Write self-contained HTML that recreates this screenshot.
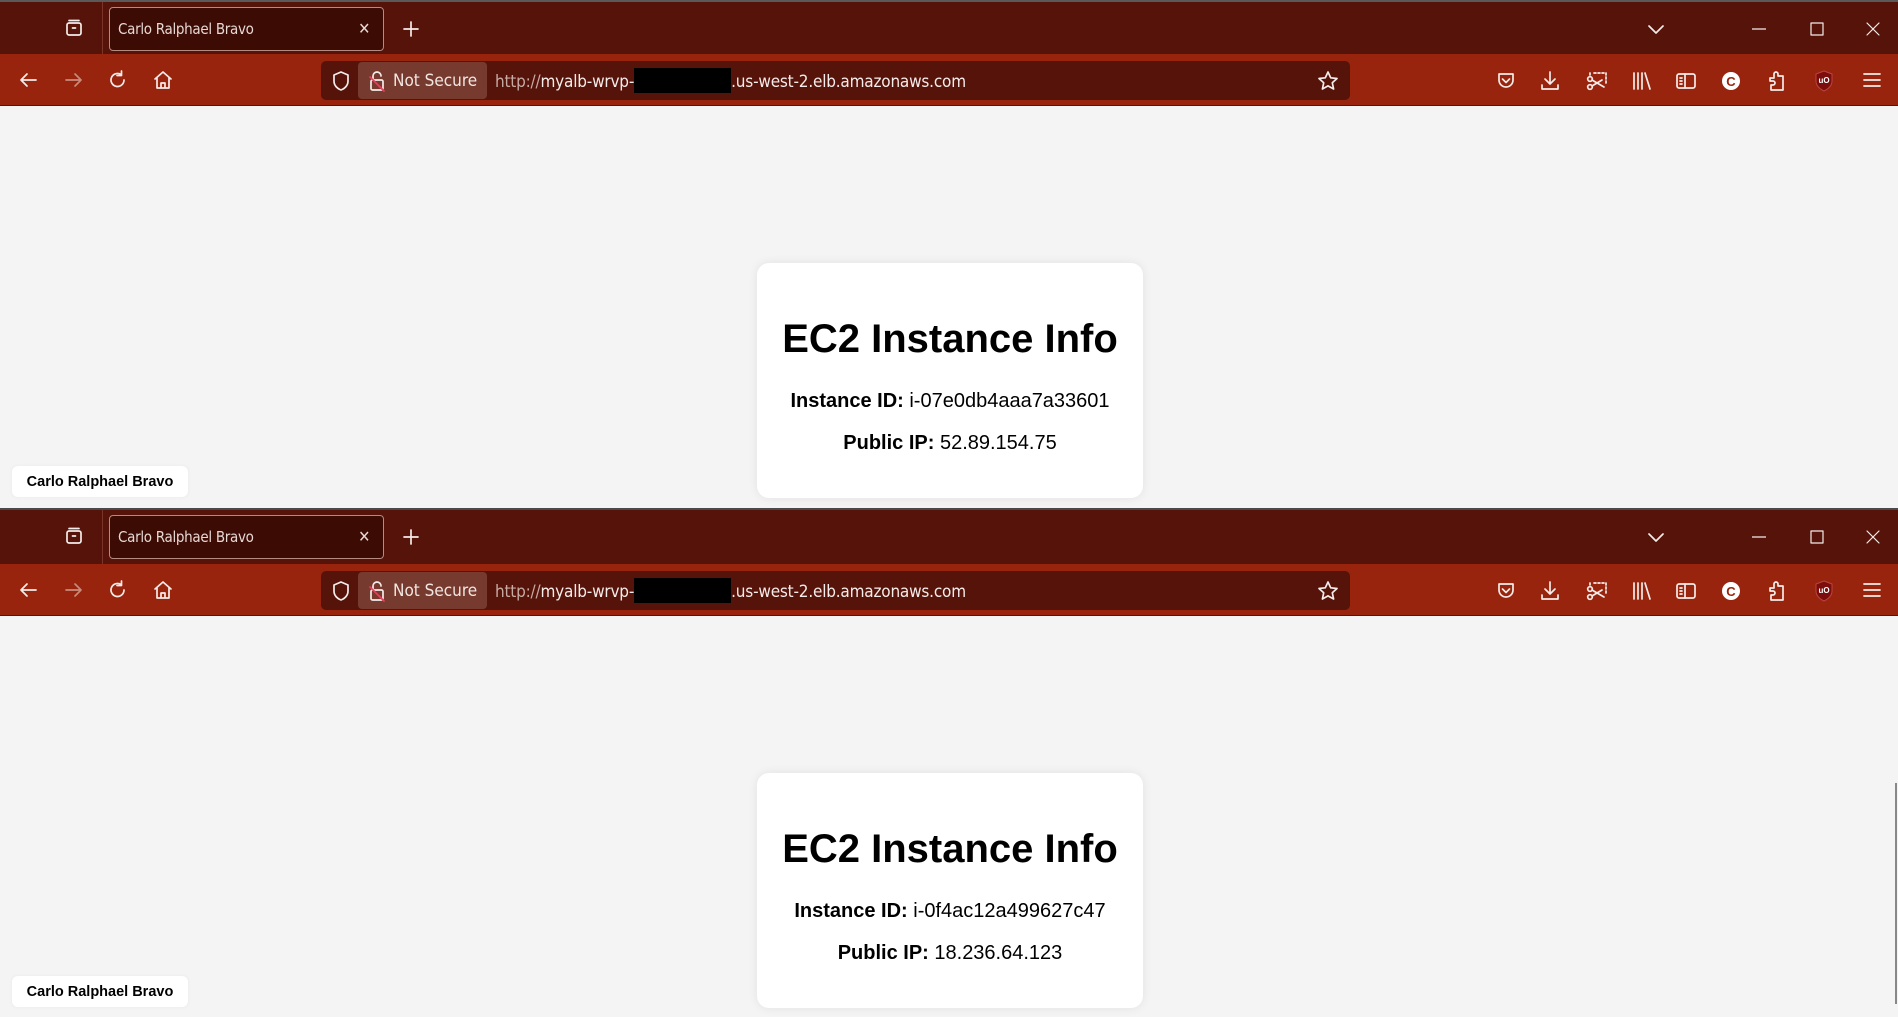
<!DOCTYPE html>
<html><head><meta charset="utf-8"><style>
*{margin:0;padding:0;box-sizing:border-box}
body{width:1898px;height:1017px;overflow:hidden;background:#4a4a4a;font-family:"Liberation Sans",sans-serif;position:relative}
.win{position:absolute;left:0;width:1898px;overflow:hidden;background:#f4f4f4}
.tabbar{position:absolute;left:0;top:0;width:100%;height:54px;background:#561309;border-top:2px solid #5a5a5a}
.toolbar{position:absolute;left:0;top:54px;width:100%;height:52px;background:#98240d;border-bottom:1px solid #5a1208}
.tab{position:absolute;left:109px;top:5px;width:275px;height:44px;background:#3b0b04;border:1px solid #b58a80;border-radius:4px;color:#e8d8d4;font-size:15px;line-height:42px;padding-left:8px;font-family:"DejaVu Sans Condensed","Liberation Sans",sans-serif;letter-spacing:-0.3px}
.tab .x{position:absolute;right:13px;top:0;color:#e8d8d4;font-size:16px}
.sep{position:absolute;left:102px;top:0;width:1px;height:54px;background:#7a3428}
.url{position:absolute;left:321px;top:61px;width:1029px;height:39px;background:#561309;border-radius:5px}
.ns{position:absolute;left:358px;top:62px;width:129px;height:37px;background:#763a2e;border-radius:4px;color:#f2e6e2;font-size:17px;line-height:39px;padding-left:35px;font-family:"DejaVu Sans Condensed","Liberation Sans",sans-serif}
.utext{position:absolute;left:495px;top:63px;line-height:39px;font-size:17px;color:#f4ecea;font-family:"DejaVu Sans Condensed","Liberation Sans",sans-serif;letter-spacing:-0.2px}
.utext .g{color:#c7aaa4}
.red{display:inline-block;width:97px;height:25px;background:#000;vertical-align:-6px}
svg.i{position:absolute;fill:none;stroke:#f4ecea;stroke-width:1.7;stroke-linecap:round;stroke-linejoin:round}
.content{position:absolute;left:0;top:106px;width:100%;height:402px;background:#f4f4f4}
.card{position:absolute;left:757px;width:386px;height:235px;background:#fff;border-radius:12px;box-shadow:0 0 10px rgba(0,0,0,.08);text-align:center;color:#000}
.card h1{font-size:40px;font-weight:bold;margin-top:53px;line-height:46px}
.card p{font-size:20px;margin-top:28px;line-height:23px}
.card p+p{margin-top:19px}
.label{position:absolute;left:12px;width:176px;height:31px;background:#fff;border-radius:6px;font-weight:bold;font-size:14.5px;line-height:33px;text-align:center;box-shadow:0 0 4px rgba(0,0,0,.05)}
</style></head><body>

<div class="win" style="top:0;height:508px">
 <div class="tabbar">
  <svg class="i" style="left:64px;top:16px" width="20" height="20" viewBox="0 0 20 20"><rect x="3" y="5" width="14" height="12" rx="2"/><path d="M5 2.5h10M8.5 10h3"/></svg>
  <div class="sep"></div>
  <div class="tab">Carlo Ralphael Bravo<span class="x">✕</span></div>
  <svg class="i" style="left:403px;top:19px" width="16" height="16" viewBox="0 0 16 16"><path d="M8 1v14M1 8h14"/></svg>
  <svg class="i" style="left:1648px;top:23px" width="16" height="10" viewBox="0 0 16 10"><path d="M1 1l7 7 7-7"/></svg>
  <svg class="i" style="left:1752px;top:26px" width="14" height="2" viewBox="0 0 14 2"><path d="M0 1h14" stroke-width="1.2"/></svg>
  <svg class="i" style="left:1810px;top:20px" width="14" height="14" viewBox="0 0 14 14"><rect x="1" y="1" width="12" height="12" stroke-width="1.2"/></svg>
  <svg class="i" style="left:1866px;top:20px" width="14" height="14" viewBox="0 0 14 14"><path d="M1 1l12 12M13 1L1 13" stroke-width="1.2"/></svg>
 </div>
 <div class="toolbar">
  <svg class="i" style="left:19px;top:18px" width="18" height="16" viewBox="0 0 18 16"><path d="M17 8H2M8 2L2 8l6 6"/></svg>
  <svg class="i" style="left:65px;top:18px;stroke:#c98a7c" width="18" height="16" viewBox="0 0 18 16"><path d="M1 8h15M10 2l6 6-6 6"/></svg>
  <svg class="i" style="left:109px;top:16px" width="18" height="20" viewBox="0 0 18 20"><path d="M15 10a6.5 6.5 0 1 1-3-5.5M12.5 1v4.5H8"/></svg>
  <svg class="i" style="left:153px;top:16px" width="20" height="20" viewBox="0 0 20 20"><path d="M2 9L10 2l8 7M4 8v10h12V8M8 18v-5h4v5"/></svg>
 </div>
 <div class="url"></div>
 <svg class="i" style="left:332px;top:70px" width="18" height="22" viewBox="0 0 18 22"><path d="M9 2l7 3v6c0 5-4 8-7 9-3-1-7-4-7-9V5z"/></svg>
 <div class="ns">Not Secure</div>
 <svg class="i" style="left:369px;top:70px" width="16" height="22" viewBox="0 0 16 22"><path d="M4 10V6a4 4 0 0 1 8 0"/><rect x="2" y="10" width="12" height="10" rx="1.5"/><path d="M1 7l14 14" stroke="#e0405a"/></svg>
 <div class="utext"><span class="g">http://</span>myalb-wrvp-<span class="red"></span>.us-west-2.elb.amazonaws.com</div>
 <svg class="i" style="left:1317px;top:70px" width="22" height="22" viewBox="0 0 22 22"><path d="M11 2l2.7 5.8 6.3.7-4.7 4.3 1.3 6.2L11 15.9 5.4 19l1.3-6.2L2 8.5l6.3-.7z"/></svg>
 <svg class="i" style="left:1496px;top:71px" width="20" height="20" viewBox="0 0 20 20"><path d="M3 3h14v6a7 7 0 0 1-14 0z"/><path d="M6.5 8l3.5 3.5L13.5 8"/></svg>
 <svg class="i" style="left:1540px;top:70px" width="20" height="22" viewBox="0 0 20 22"><path d="M10 2v12M5 9l5 5 5-5M2 15v4h16v-4"/></svg>
 <svg class="i" style="left:1586px;top:71px" width="22" height="20" viewBox="0 0 22 20"><path d="M8 2h12v11M4 2v3" stroke-dasharray="2 2"/><circle cx="4" cy="8" r="2.3"/><circle cx="4" cy="16" r="2.3"/><path d="M6 9l12 7M6 15l10-6"/></svg>
 <svg class="i" style="left:1632px;top:71px" width="20" height="20" viewBox="0 0 20 20"><path d="M2 2v16M6 2v16M10 2v16M13 2l5 16"/></svg>
 <svg class="i" style="left:1675px;top:71px" width="22" height="20" viewBox="0 0 22 20"><rect x="2" y="3" width="18" height="14" rx="2"/><path d="M10 3v14M5 7h2M5 10h2M5 13h2"/></svg>
 <svg style="position:absolute;left:1721px;top:71px" width="20" height="20" viewBox="0 0 20 20"><circle cx="10" cy="10" r="9" fill="#fff"/><text x="10" y="15" text-anchor="middle" font-family="Liberation Sans" font-weight="bold" font-size="13" fill="#98240d">C</text></svg>
 <svg class="i" style="left:1767px;top:70px" width="20" height="22" viewBox="0 0 20 22"><path d="M3 8h4V4a2 2 0 0 1 4 0v2h5v14H4v-5h2a2 2 0 0 0 0-4H3z"/></svg>
 <svg style="position:absolute;left:1815px;top:70px" width="18" height="22" viewBox="0 0 18 22"><path d="M9 1l8 3v7c0 5-4 8-8 10-4-2-8-5-8-10V4z" fill="#7b0d0d" stroke="#b44" stroke-width="1"/><text x="9" y="13" text-anchor="middle" font-family="Liberation Sans" font-weight="bold" font-size="8" fill="#fff">uO</text></svg>
 <svg class="i" style="left:1863px;top:72px" width="18" height="16" viewBox="0 0 18 16"><path d="M1 2h16M1 8h16M1 14h16"/></svg>
 <div class="content"></div>
 <div class="card" style="top:263px"><h1>EC2 Instance Info</h1><p><b>Instance ID:</b> i-07e0db4aaa7a33601</p><p><b>Public IP:</b> 52.89.154.75</p></div>
 <div class="label" style="top:466px">Carlo Ralphael Bravo</div>
</div>

<div class="win" style="top:510px;height:507px">
 <div class="tabbar" style="border-top:0">
  <svg class="i" style="left:64px;top:16px" width="20" height="20" viewBox="0 0 20 20"><rect x="3" y="5" width="14" height="12" rx="2"/><path d="M5 2.5h10M8.5 10h3"/></svg>
  <div class="sep"></div>
  <div class="tab">Carlo Ralphael Bravo<span class="x">✕</span></div>
  <svg class="i" style="left:403px;top:19px" width="16" height="16" viewBox="0 0 16 16"><path d="M8 1v14M1 8h14"/></svg>
  <svg class="i" style="left:1648px;top:23px" width="16" height="10" viewBox="0 0 16 10"><path d="M1 1l7 7 7-7"/></svg>
  <svg class="i" style="left:1752px;top:26px" width="14" height="2" viewBox="0 0 14 2"><path d="M0 1h14" stroke-width="1.2"/></svg>
  <svg class="i" style="left:1810px;top:20px" width="14" height="14" viewBox="0 0 14 14"><rect x="1" y="1" width="12" height="12" stroke-width="1.2"/></svg>
  <svg class="i" style="left:1866px;top:20px" width="14" height="14" viewBox="0 0 14 14"><path d="M1 1l12 12M13 1L1 13" stroke-width="1.2"/></svg>
 </div>
 <div class="toolbar">
  <svg class="i" style="left:19px;top:18px" width="18" height="16" viewBox="0 0 18 16"><path d="M17 8H2M8 2L2 8l6 6"/></svg>
  <svg class="i" style="left:65px;top:18px;stroke:#c98a7c" width="18" height="16" viewBox="0 0 18 16"><path d="M1 8h15M10 2l6 6-6 6"/></svg>
  <svg class="i" style="left:109px;top:16px" width="18" height="20" viewBox="0 0 18 20"><path d="M15 10a6.5 6.5 0 1 1-3-5.5M12.5 1v4.5H8"/></svg>
  <svg class="i" style="left:153px;top:16px" width="20" height="20" viewBox="0 0 20 20"><path d="M2 9L10 2l8 7M4 8v10h12V8M8 18v-5h4v5"/></svg>
 </div>
 <div class="url"></div>
 <svg class="i" style="left:332px;top:70px" width="18" height="22" viewBox="0 0 18 22"><path d="M9 2l7 3v6c0 5-4 8-7 9-3-1-7-4-7-9V5z"/></svg>
 <div class="ns">Not Secure</div>
 <svg class="i" style="left:369px;top:70px" width="16" height="22" viewBox="0 0 16 22"><path d="M4 10V6a4 4 0 0 1 8 0"/><rect x="2" y="10" width="12" height="10" rx="1.5"/><path d="M1 7l14 14" stroke="#e0405a"/></svg>
 <div class="utext"><span class="g">http://</span>myalb-wrvp-<span class="red"></span>.us-west-2.elb.amazonaws.com</div>
 <svg class="i" style="left:1317px;top:70px" width="22" height="22" viewBox="0 0 22 22"><path d="M11 2l2.7 5.8 6.3.7-4.7 4.3 1.3 6.2L11 15.9 5.4 19l1.3-6.2L2 8.5l6.3-.7z"/></svg>
 <svg class="i" style="left:1496px;top:71px" width="20" height="20" viewBox="0 0 20 20"><path d="M3 3h14v6a7 7 0 0 1-14 0z"/><path d="M6.5 8l3.5 3.5L13.5 8"/></svg>
 <svg class="i" style="left:1540px;top:70px" width="20" height="22" viewBox="0 0 20 22"><path d="M10 2v12M5 9l5 5 5-5M2 15v4h16v-4"/></svg>
 <svg class="i" style="left:1586px;top:71px" width="22" height="20" viewBox="0 0 22 20"><path d="M8 2h12v11M4 2v3" stroke-dasharray="2 2"/><circle cx="4" cy="8" r="2.3"/><circle cx="4" cy="16" r="2.3"/><path d="M6 9l12 7M6 15l10-6"/></svg>
 <svg class="i" style="left:1632px;top:71px" width="20" height="20" viewBox="0 0 20 20"><path d="M2 2v16M6 2v16M10 2v16M13 2l5 16"/></svg>
 <svg class="i" style="left:1675px;top:71px" width="22" height="20" viewBox="0 0 22 20"><rect x="2" y="3" width="18" height="14" rx="2"/><path d="M10 3v14M5 7h2M5 10h2M5 13h2"/></svg>
 <svg style="position:absolute;left:1721px;top:71px" width="20" height="20" viewBox="0 0 20 20"><circle cx="10" cy="10" r="9" fill="#fff"/><text x="10" y="15" text-anchor="middle" font-family="Liberation Sans" font-weight="bold" font-size="13" fill="#98240d">C</text></svg>
 <svg class="i" style="left:1767px;top:70px" width="20" height="22" viewBox="0 0 20 22"><path d="M3 8h4V4a2 2 0 0 1 4 0v2h5v14H4v-5h2a2 2 0 0 0 0-4H3z"/></svg>
 <svg style="position:absolute;left:1815px;top:70px" width="18" height="22" viewBox="0 0 18 22"><path d="M9 1l8 3v7c0 5-4 8-8 10-4-2-8-5-8-10V4z" fill="#7b0d0d" stroke="#b44" stroke-width="1"/><text x="9" y="13" text-anchor="middle" font-family="Liberation Sans" font-weight="bold" font-size="8" fill="#fff">uO</text></svg>
 <svg class="i" style="left:1863px;top:72px" width="18" height="16" viewBox="0 0 18 16"><path d="M1 2h16M1 8h16M1 14h16"/></svg>
 <div class="content"></div>
 <div class="card" style="top:263px"><h1>EC2 Instance Info</h1><p><b>Instance ID:</b> i-0f4ac12a499627c47</p><p><b>Public IP:</b> 18.236.64.123</p></div>
 <div class="label" style="top:466px">Carlo Ralphael Bravo</div>
 <div style="position:absolute;left:1895px;top:273px;width:2px;height:221px;background:#888"></div>
</div>
</body></html>
